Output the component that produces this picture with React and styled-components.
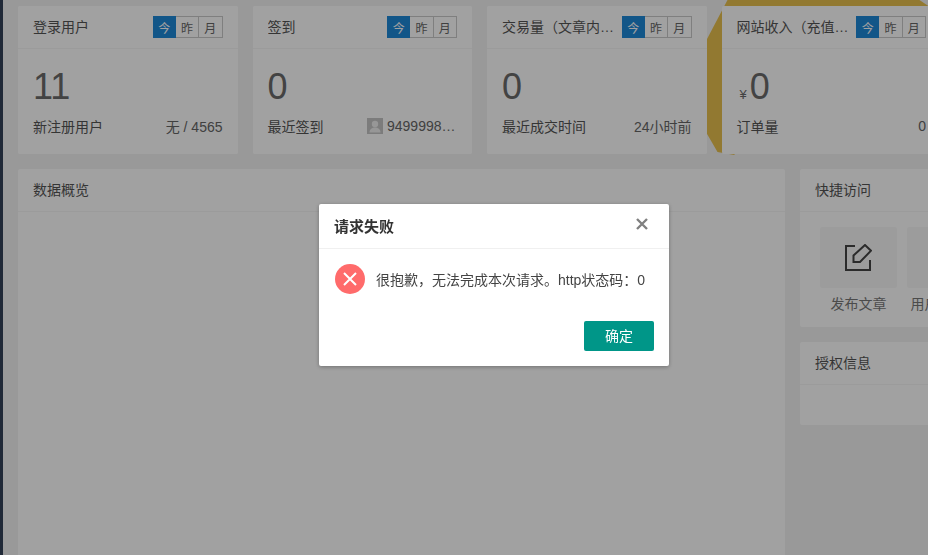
import styled, { createGlobalStyle } from 'styled-components'

const FONT = `"Liberation Sans", "Noto Sans CJK SC", sans-serif`

const Global = createGlobalStyle`
    html, body {
        margin: 0;
        height: 100%;
        overflow: hidden;
        background: #f2f2f2;
        font-family: ${FONT};
        font-size: 14px;
        color: #555;
    }
    * { box-sizing: border-box; }
`
const Page = styled.div`
    display: flex;
    height: 555px;
    overflow: hidden;
`
const Sidebar = styled.div`
    flex: 0 0 3px;
    background: #344258;
`
const Main = styled.div`
    flex: 0 0 auto;
    width: 953px;
    padding: 6px 15px 0;
    display: flex;
    flex-direction: column;
    gap: 15px;
`
const StatRow = styled.div`
    display: grid;
    grid-template-columns: repeat(4, 219.5px);
    gap: 15px;
`
const Card = styled.div`
    position: relative;
    background: #fff;
    border-radius: 2px;
    height: 148px;
`
const GoldRing = styled.div`
    position: absolute;
    left: -15px;
    top: -6px;
    width: 232px;
    height: 156px;
    background: #e8c04e;
    clip-path: polygon(21px 0, 213px 0, 222px 6px, 232px 6px, 232px 154px, 28px 154px, 28px 155px, 11px 152px, 0 133px, 0 40px);
`
const CardBody = styled.div`
    position: relative;
    height: 100%;
    background: #fff;
    border-radius: 2px;
`
const CardHead = styled.div`
    display: flex;
    align-items: center;
    gap: 6px;
    height: 43px;
    padding: 0 15px;
    border-bottom: 1px solid #f6f6f6;
`
const CardTitle = styled.div`
    flex: 1;
    min-width: 0;
    padding-bottom: 2px;
    white-space: nowrap;
    overflow: hidden;
    text-overflow: ellipsis;
`
const Segments = styled.div`
    display: flex;
    flex: 0 0 auto;
    height: 22px;
`
const Segment = styled.div`
    width: 23.3px;
    display: flex;
    align-items: center;
    justify-content: center;
    font-size: 12px;
    color: ${p => (p.$active ? '#fff' : '#666')};
    background: ${p => (p.$active ? '#1e88d8' : 'transparent')};
    border: 1px solid ${p => (p.$active ? '#1e88d8' : '#c9c9c9')};
    border-left-width: ${p => (p.$first ? 1 : 0)}px;
`
const CardContent = styled.div`
    padding: 0 15px;
`
const Amount = styled.div`
    height: 62px;
    padding-top: 18px;
    font-size: 36px;
    line-height: 40px;
    color: #6a6a6a;
`
const Currency = styled.span`
    font-size: 13px;
    margin: 0 3px 0 3px;
`
const CardFoot = styled.div`
    display: flex;
    align-items: center;
    justify-content: space-between;
    height: 22px;
    margin-top: 4px;
`
const FootValue = styled.div`
    display: flex;
    align-items: center;
    gap: 4px;
    color: #666;
`
const FootText = styled.span`
    max-width: 70px;
    white-space: nowrap;
    overflow: hidden;
    text-overflow: ellipsis;
`
const Avatar = styled.svg`
    display: block;
    flex: 0 0 16px;
    width: 16px;
    height: 16px;
`
const LowerRow = styled.div`
    display: grid;
    grid-template-columns: 767px 156px;
    gap: 15px;
    flex: 1;
    min-height: 0;
`
const Panel = styled.div`
    background: #fff;
    border-radius: 2px;
    height: ${p => p.$height || 'auto'};
`
const PanelHead = styled.div`
    height: 43px;
    line-height: 42px;
    padding: 0 15px;
    border-bottom: 1px solid #f6f6f6;
`
const SideColumn = styled.div`
    display: flex;
    flex-direction: column;
    gap: 15px;
`
const Shortcuts = styled.div`
    display: flex;
    gap: 10px;
    padding: 15px 20px 0;
    overflow: hidden;
`
const Shortcut = styled.div`
    flex: 0 0 77px;
    display: flex;
    flex-direction: column;
    align-items: center;
    gap: 5px;
    color: #777;
    white-space: nowrap;
`
const ShortcutTile = styled.div`
    width: 77px;
    height: 61px;
    display: flex;
    align-items: center;
    justify-content: center;
    background: #f8f8f8;
    border-radius: 2px;
`
const Shade = styled.div`
    position: fixed;
    inset: 0;
    background: rgba(0, 0, 0, .37);
`
const Dialog = styled.div`
    position: fixed;
    left: 319px;
    top: 204px;
    width: 350px;
    height: 162px;
    background: #fff;
    border-radius: 2px;
    box-shadow: 0 1px 4px rgba(0, 0, 0, .3);
`
const DialogHead = styled.div`
    display: flex;
    align-items: center;
    justify-content: space-between;
    height: 45px;
    padding: 0 21px 2px 15px;
    border-bottom: 1px solid #f0f0f0;
    font-size: 15px;
    font-weight: 700;
    color: #333;
`
const CloseIcon = styled.svg`
    display: block;
    width: 12px;
    height: 12px;
    margin-top: -3px;
    stroke: #808080;
    stroke-width: 2.4;
`
const DialogBody = styled.div`
    display: flex;
    align-items: center;
    gap: 11px;
    height: 62px;
    padding: 0 10px 2px 16px;
    font-size: 14px;
    color: #444;
    white-space: nowrap;
`
const ErrorIcon = styled.svg`
    flex: 0 0 30px;
    width: 30px;
    height: 30px;
`
const DialogFoot = styled.div`
    display: flex;
    justify-content: flex-end;
    padding: 10px 15px 0;
`
const ConfirmButton = styled.button`
    width: 70px;
    height: 30px;
    padding: 0 0 2px;
    border: 0;
    border-radius: 2px;
    background: #009688;
    color: #fff;
    font-family: ${FONT};
    font-size: 14px;
`

const stats = [
    { title: '登录用户', value: '11', label: '新注册用户', right: '无 / 4565' },
    { title: '签到', value: '0', label: '最近签到', right: '949999800123', avatar: true },
    { title: '交易量\uFF08文章内购买\uFF09', value: '0', label: '最近成交时间', right: '24小时前' },
    { title: '网站收入\uFF08充值及购买\uFF09', value: '0', label: '订单量', right: '0', money: true, ring: true },
]

const StatCard = ({ title, value, label, right, avatar, money, ring }) => (
    <Card>
        {ring && <GoldRing />}
        <CardBody>
            <CardHead>
                <CardTitle>{title}</CardTitle>
                <Segments>
                    <Segment $active $first>今</Segment>
                    <Segment>昨</Segment>
                    <Segment>月</Segment>
                </Segments>
            </CardHead>
            <CardContent>
                <Amount>{money && <Currency>¥</Currency>}{value}</Amount>
                <CardFoot>
                    <span>{label}</span>
                    <FootValue>
                        {avatar && (
                            <Avatar viewBox="0 0 16 16">
                                <rect width="16" height="16" fill="#c4c4c4" />
                                <circle cx="8" cy="6" r="3.2" fill="#efefef" />
                                <path d="M2.5 14.5c0-3.5 2.500-5 5.500-5s5.500 1.500 5.500 5z" fill="#efefef" />
                            </Avatar>
                        )}
                        <FootText>{right}</FootText>
                    </FootValue>
                </CardFoot>
            </CardContent>
        </CardBody>
    </Card>
)

const App = () => (
    <>
        <Global />
        <Page>
            <Sidebar />
            <Main>
                <StatRow>
                    {stats.map(s => <StatCard key={s.title} {...s} />)}
                </StatRow>
                <LowerRow>
                    <Panel $height="500px">
                        <PanelHead>数据概览</PanelHead>
                    </Panel>
                    <SideColumn>
                        <Panel $height="158px">
                            <PanelHead>快捷访问</PanelHead>
                            <Shortcuts>
                                <Shortcut>
                                    <ShortcutTile>
                                        <svg width="27" height="27" viewBox="0 0 27 27" fill="none" stroke="#444" strokeWidth="2">
                                            <path d="M10 2H1v24h24V16" />
                                            <path d="M8.500 18v-6.500L20 1l6 5.700L15 18z" />
                                        </svg>
                                    </ShortcutTile>
                                    发布文章
                                </Shortcut>
                                <Shortcut>
                                    <ShortcutTile />
                                    用户和权限
                                </Shortcut>
                            </Shortcuts>
                        </Panel>
                        <Panel $height="83px">
                            <PanelHead>授权信息</PanelHead>
                        </Panel>
                    </SideColumn>
                </LowerRow>
            </Main>
        </Page>
        <Shade />
        <Dialog>
            <DialogHead>
                请求失败
                <CloseIcon viewBox="0 0 12 12">
                    <path d="M1 1l10 10M11 1L1 11" />
                </CloseIcon>
            </DialogHead>
            <DialogBody>
                <ErrorIcon viewBox="0 0 30 30">
                    <circle cx="15" cy="15" r="15" fill="#ff6b6b" />
                    <path d="M9 9l12 12M21 9L9 21" stroke="#fff" strokeWidth="2" />
                </ErrorIcon>
                {'很抱歉\uFF0C无法完成本次请求。http状态码\uFF1A0'}
            </DialogBody>
            <DialogFoot>
                <ConfirmButton>确定</ConfirmButton>
            </DialogFoot>
        </Dialog>
    </>
)

export default App
